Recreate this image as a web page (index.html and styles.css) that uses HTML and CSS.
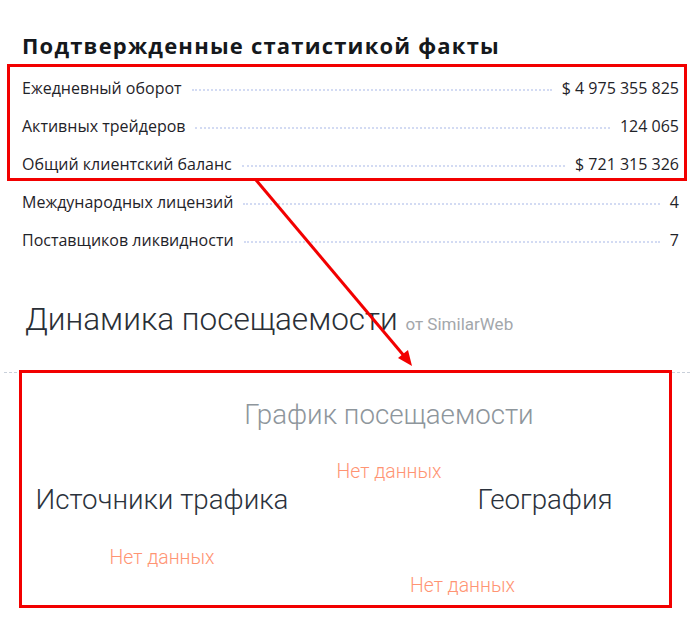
FILE: index.html
```html
<!DOCTYPE html>
<html lang="ru">
<head>
  <meta charset="UTF-8">
  <title>Статистика брокера</title>
  <link rel="stylesheet" href="styles.css">
</head>
<body>
  <div class="page">
    <section class="facts">
      <h2 class="facts-title">Подтвержденные статистикой факты</h2>
      <ul class="facts-list">
        <li class="fact"><span class="fact-label">Ежедневный оборот</span><span class="fact-dots"></span><span class="fact-value">$ 4 975 355 825</span></li>
        <li class="fact"><span class="fact-label">Активных трейдеров</span><span class="fact-dots"></span><span class="fact-value">124 065</span></li>
        <li class="fact"><span class="fact-label">Общий клиентский баланс</span><span class="fact-dots"></span><span class="fact-value">$ 721 315 326</span></li>
        <li class="fact"><span class="fact-label">Международных лицензий</span><span class="fact-dots"></span><span class="fact-value">4</span></li>
        <li class="fact"><span class="fact-label">Поставщиков ликвидности</span><span class="fact-dots"></span><span class="fact-value">7</span></li>
      </ul>
    </section>

    <section class="traffic">
      <h2 class="traffic-title">Динамика посещаемости <small>от SimilarWeb</small></h2>
      <div class="traffic-body">
        <div class="traffic-chart">
          <h3 class="chart-title muted">График посещаемости</h3>
          <p class="no-data">Нет данных</p>
        </div>
        <div class="traffic-row">
          <div class="traffic-col">
            <h3 class="chart-title">Источники трафика</h3>
            <p class="no-data no-data-left">Нет данных</p>
          </div>
          <div class="traffic-col">
            <h3 class="chart-title">География</h3>
            <p class="no-data no-data-right">Нет данных</p>
          </div>
        </div>
      </div>
    </section>

    <!-- annotation overlay -->
    <div class="mark mark-facts"></div>
    <div class="mark mark-traffic"></div>
    <svg class="mark-arrow" width="700" height="620" viewBox="0 0 700 620">
      <line x1="256" y1="180" x2="405" y2="357" stroke="#f20000" stroke-width="3"/>
      <polygon points="412,366 398,358 408,350" fill="#f20000"/>
    </svg>
  </div>
</body>
</html>
```

FILE: styles.css
```css
:root {
  --text: #1f2329;
  --dots: #d3dbf3;
  --muted: #9aa0a6;
  --salmon: #ff9473;
  --mark: #f20000;
}

* {
  margin: 0;
  padding: 0;
  box-sizing: border-box;
}

body {
  background: #fff;
  color: var(--text);
  font-family: "Open Sans", "Noto Sans", sans-serif;
}

.page {
  position: relative;
  width: 700px;
  height: 620px;
  overflow: hidden;
}

/* facts */
.facts {
  padding: 31px 21px 0 22px;
}

.facts-title {
  font-size: 22px;
  font-weight: 700;
  line-height: 28px;
  color: #15181c;
  letter-spacing: 1.2px;
}

.facts-list {
  list-style: none;
  margin-top: 10px;
}

.fact {
  display: flex;
  align-items: center;
  height: 38px;
  font-size: 16px;
}

.fact-label {
  white-space: nowrap;
}

.fact-dots {
  flex: 1;
  margin: 4px 10px 0;
  border-bottom: 2px dotted var(--dots);
}

.fact-value {
  white-space: nowrap;
}

/* traffic */
.traffic {
  margin-top: 41px;
}

.traffic-title {
  padding-left: 25px;
  font-family: Roboto, sans-serif;
  font-weight: 300;
  font-size: 31.5px;
  line-height: 40px;
  color: #2a2f36;
}

.traffic-title small {
  font-size: 17px;
  line-height: 1;
  color: #a3a7ab;
  font-weight: 400;
}

.traffic-body {
  margin: 32px 10px 0 4px;
  border-top: 1px dashed #c9d0da;
  font-family: Roboto, sans-serif;
}

.traffic-chart {
  padding: 25px 0 0 84px;
  text-align: center;
}

.chart-title {
  font-weight: 300;
  font-size: 27.7px;
  line-height: 34px;
  color: #2b323c;
}

.chart-title.muted {
  color: #8e969c;
}

.no-data {
  font-weight: 300;
  font-size: 19.4px;
  line-height: 24px;
  color: var(--salmon);
}

.traffic-chart .no-data {
  margin-top: 28px;
}

.traffic-row {
  display: grid;
  grid-template-columns: 316px 1fr;
  column-gap: 80px;
  margin-top: -1px;
}

.traffic-col {
  text-align: center;
}

.no-data-left {
  margin-top: 29px;
}

.no-data-right {
  margin-top: 57px;
  text-align: left;
  padding-left: 10px;
}

/* annotation overlay */
.mark {
  position: absolute;
  border: 3px solid var(--mark);
}

.mark-facts {
  left: 7px;
  top: 64px;
  width: 680px;
  height: 117px;
}

.mark-traffic {
  left: 19px;
  top: 370px;
  width: 653px;
  height: 238px;
}

.mark-arrow {
  position: absolute;
  left: 0;
  top: 0;
}
```
